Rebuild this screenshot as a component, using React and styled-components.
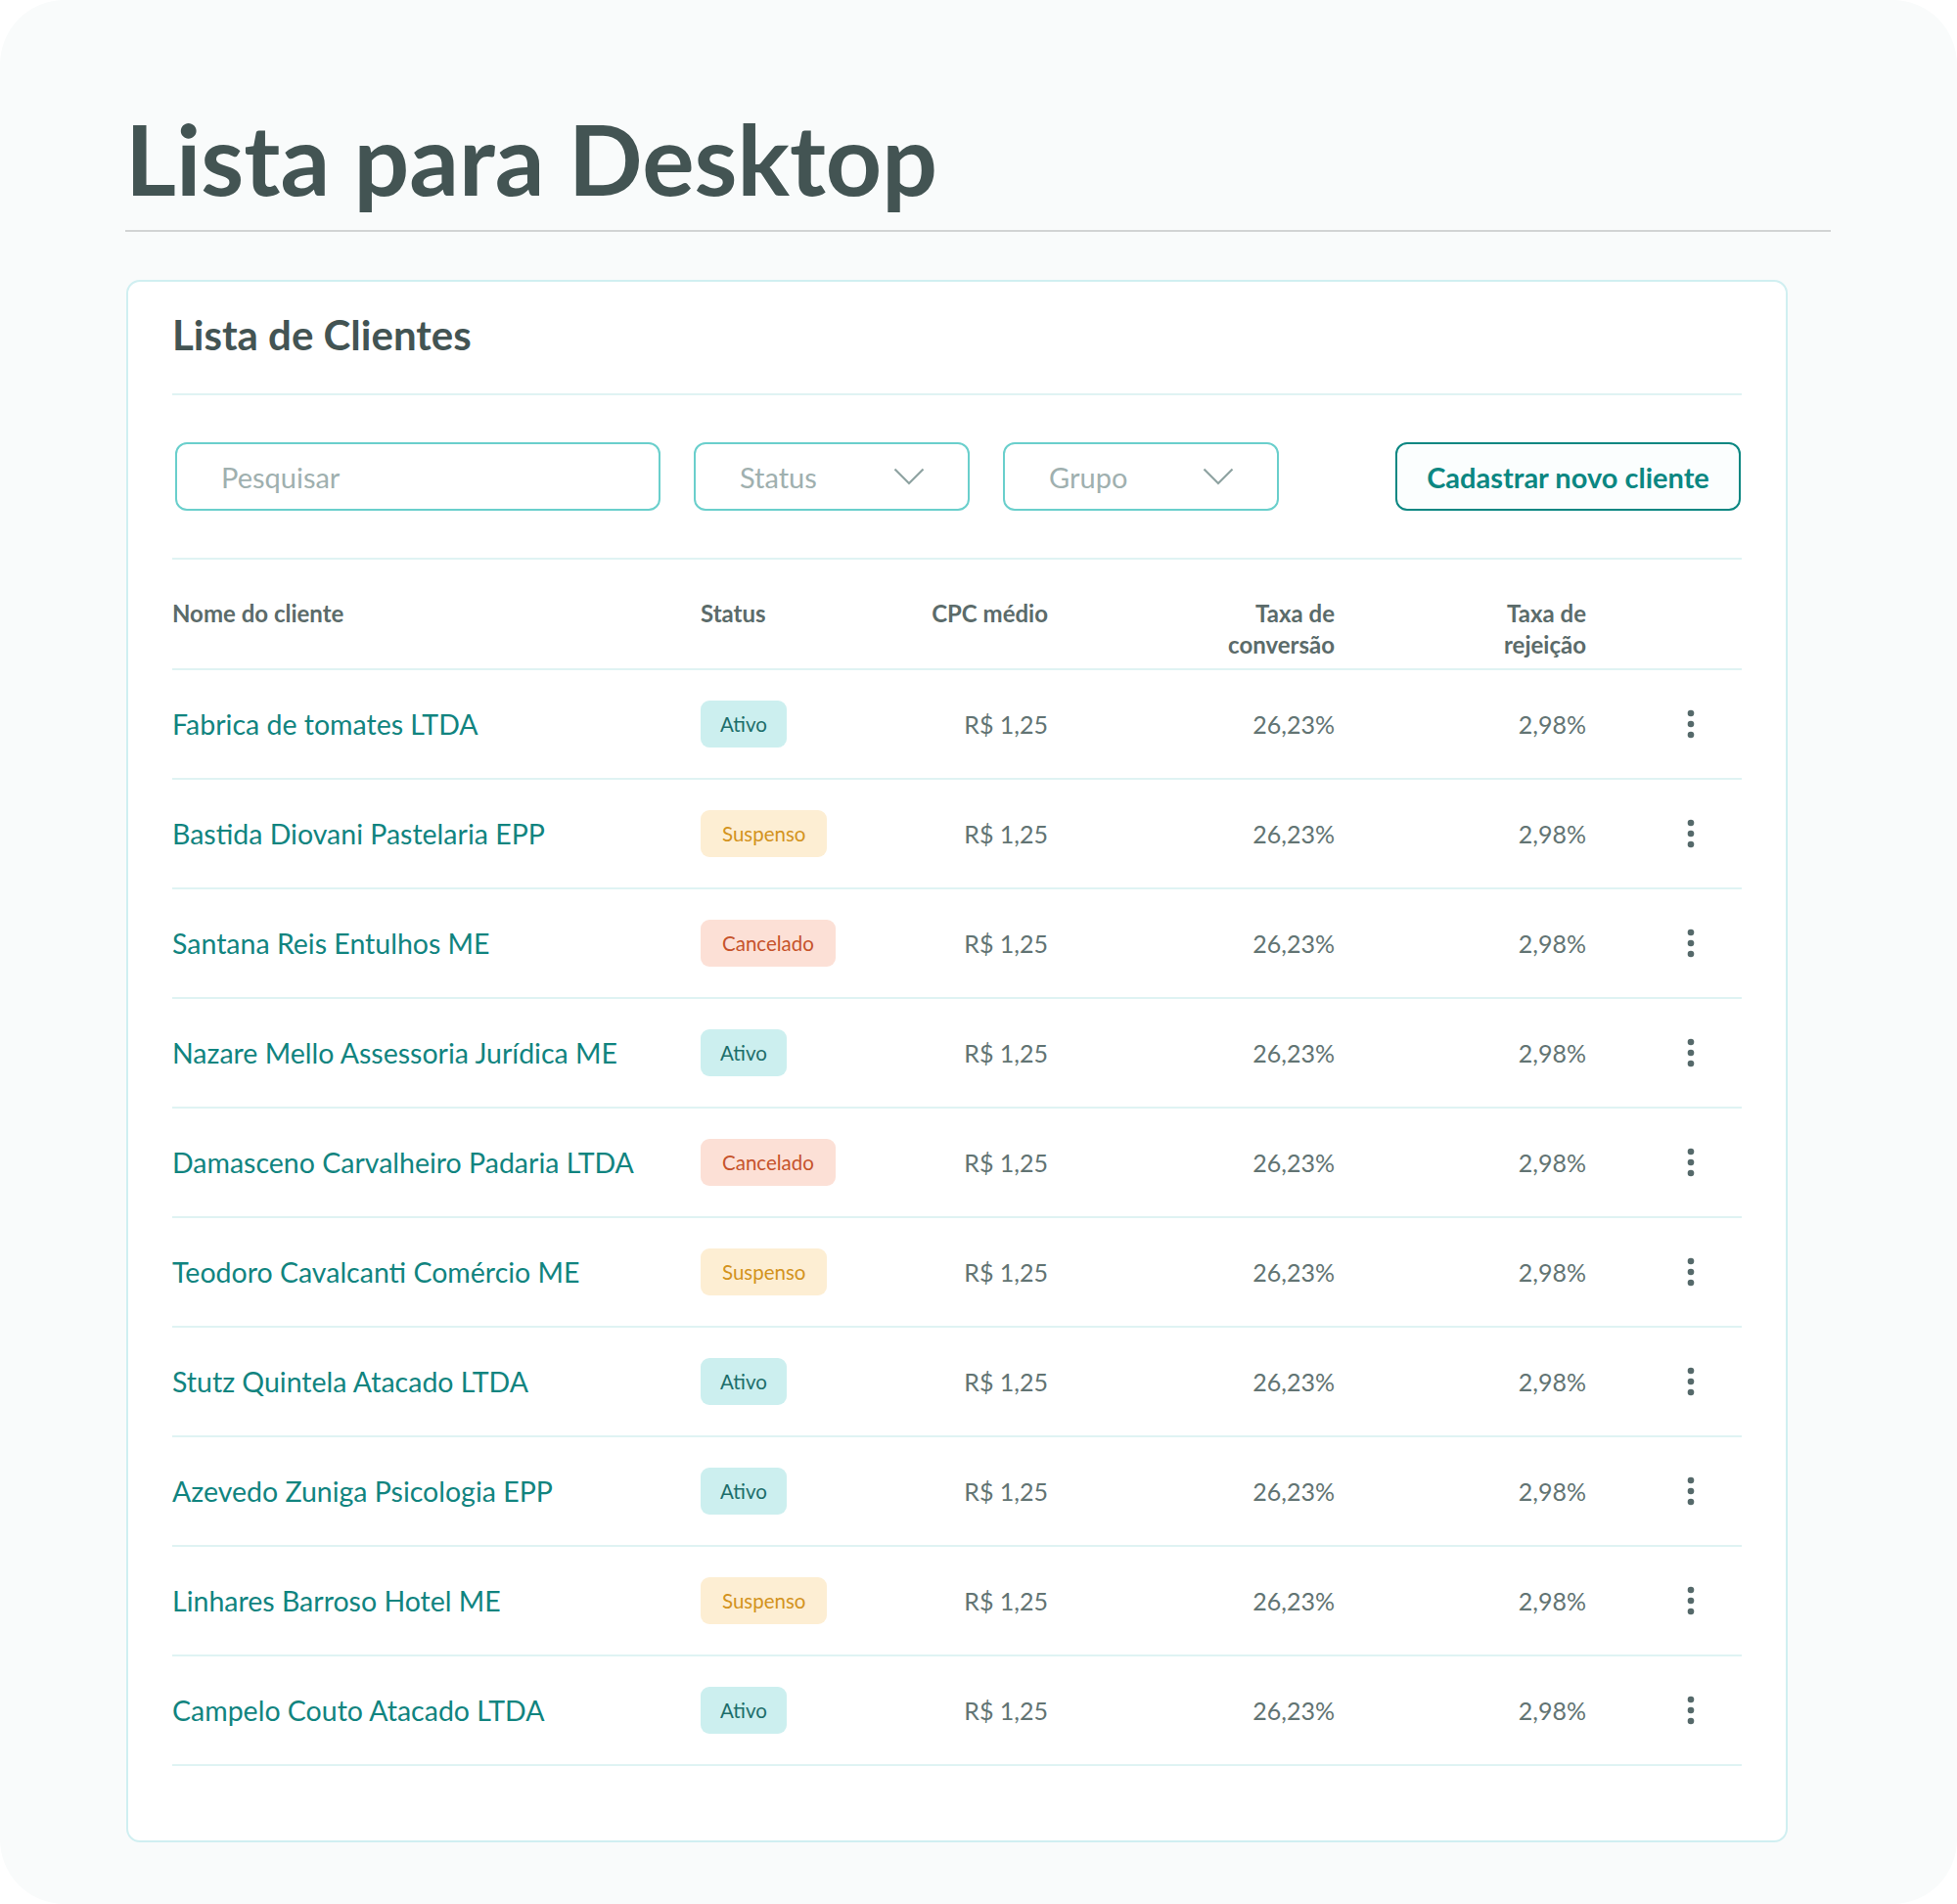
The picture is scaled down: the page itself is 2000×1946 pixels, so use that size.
import styled, { createGlobalStyle } from 'styled-components';

const GlobalStyle = createGlobalStyle`
  html, body {
    margin: 0;
    padding: 0;
    background: #ffffff;
  }
  * {
    box-sizing: border-box;
  }
  body {
    font-family: 'Lato', 'Noto Sans', sans-serif;
  }
`;

const Frame = styled.div`
  width: 2000px;
  min-height: 1946px;
  background: #f9fbfb;
  border-radius: 66px;
  padding: 111px 129px 0 128px;
`;

const PageTitle = styled.h1`
  margin: 0;
  font-size: 100px;
  line-height: 100px;
  font-weight: 700;
  color: #435453;
`;

const TitleRule = styled.hr`
  margin: 24px 0 0;
  border: 0;
  height: 2px;
  background: #d2d4d4;
`;

const Card = styled.section`
  width: 1698px;
  margin: 49px 0 0 1px;
  background: #ffffff;
  border: 2px solid #d0eff1;
  border-radius: 14px;
  padding: 29px 45px 76px;
`;

const CardTitle = styled.h2`
  margin: 0;
  font-size: 42px;
  line-height: 50px;
  font-weight: 700;
  color: #435453;
`;

const Rule = styled.div`
  height: 2px;
  background: #dff3f3;
  margin-top: ${(p) => p.gap}px;
`;

const Toolbar = styled.div`
  display: flex;
  align-items: center;
  gap: 34px;
  height: 70px;
  margin-top: 48px;
  padding: 0 1px 0 3px;
`;

const SearchInput = styled.input`
  width: 496px;
  height: 70px;
  border: 2px solid #6acfcc;
  border-radius: 12px;
  padding: 0 0 0 45px;
  font-family: 'Lato', sans-serif;
  font-size: 29px;
  color: #435453;
  background: #ffffff;
  outline: none;

  &::placeholder {
    color: #9fb0af;
  }
`;

const Select = styled.button`
  width: 282px;
  height: 70px;
  border: 2px solid #6acfcc;
  border-radius: 12px;
  background: #ffffff;
  padding: 0 44px 0 45px;
  display: flex;
  align-items: center;
  justify-content: space-between;
  font-family: 'Lato', sans-serif;
  font-size: 29px;
  color: #9fb0af;
  cursor: pointer;
`;

const PrimaryButton = styled.button`
  margin-left: auto;
  width: 353px;
  height: 70px;
  border: 2px solid #0b8782;
  border-radius: 12px;
  background: #fbfefe;
  font-family: 'Lato', sans-serif;
  font-size: 29px;
  font-weight: 700;
  color: #0b8782;
  cursor: pointer;
`;

const Table = styled.div`
  display: flex;
  flex-direction: column;
`;

const Row = styled.div`
  display: grid;
  grid-template-columns: 540px 205px 150px 293px 257px 1fr;
  align-items: ${(p) => (p.head ? 'start' : 'center')};
  height: ${(p) => (p.head ? 113 : 112)}px;
  padding-top: ${(p) => (p.head ? 39 : 0)}px;
  border-bottom: 2px solid #dff3f3;
`;

const HeadCell = styled.div`
  font-size: 24px;
  line-height: 32px;
  font-weight: 700;
  color: #5b6b6a;
  text-align: ${(p) => p.align || 'left'};
`;

const Name = styled.div`
  font-size: 28.5px;
  color: #11847f;
`;

const Value = styled.div`
  font-size: 25px;
  color: #627473;
  text-align: right;
`;

const badgeColors = {
  Ativo: { bg: '#ccefef', fg: '#1d6e6b' },
  Suspenso: { bg: '#fdeed3', fg: '#d3931d' },
  Cancelado: { bg: '#fce0d6', fg: '#c6532b' },
};

const Badge = styled.span`
  justify-self: start;
  display: inline-flex;
  align-items: center;
  height: 48px;
  padding: 0 ${(p) => (p.status === 'Ativo' ? 20 : 22)}px;
  border-radius: 9px;
  font-size: 20.5px;
  background: ${(p) => badgeColors[p.status].bg};
  color: ${(p) => badgeColors[p.status].fg};
`;

const MenuButton = styled.button`
  justify-self: end;
  margin-right: 47px;
  width: 10px;
  height: 32px;
  padding: 0;
  border: 0;
  background: transparent;
  display: flex;
  align-items: center;
  justify-content: center;
  cursor: pointer;
`;

const Chevron = () => (
  <svg width="32" height="18" viewBox="0 0 32 18" fill="none">
    <polyline points="1.5,1.5 16,16 30.5,1.5" stroke="#8ea3a1" strokeWidth="2.2" />
  </svg>
);

const Kebab = () => (
  <svg width="8" height="30" viewBox="0 0 8 30">
    <circle cx="4" cy="4" r="3.3" fill="#55696a" />
    <circle cx="4" cy="15" r="3.3" fill="#55696a" />
    <circle cx="4" cy="26" r="3.3" fill="#55696a" />
  </svg>
);

const clients = [
  ['Fabrica de tomates LTDA', 'Ativo'],
  ['Bastida Diovani Pastelaria EPP', 'Suspenso'],
  ['Santana Reis Entulhos ME', 'Cancelado'],
  ['Nazare Mello Assessoria Jurídica ME', 'Ativo'],
  ['Damasceno Carvalheiro Padaria LTDA', 'Cancelado'],
  ['Teodoro Cavalcanti Comércio ME', 'Suspenso'],
  ['Stutz Quintela Atacado LTDA', 'Ativo'],
  ['Azevedo Zuniga Psicologia EPP', 'Ativo'],
  ['Linhares Barroso Hotel ME', 'Suspenso'],
  ['Campelo Couto Atacado LTDA', 'Ativo'],
];

const App = () => {
  return (
    <>
      <GlobalStyle />
      <Frame>
        <PageTitle>Lista para Desktop</PageTitle>
        <TitleRule />
        <Card>
          <CardTitle>Lista de Clientes</CardTitle>
          <Rule gap={35} />
          <Toolbar>
            <SearchInput placeholder="Pesquisar" />
            <Select>
              Status
              <Chevron />
            </Select>
            <Select>
              Grupo
              <Chevron />
            </Select>
            <PrimaryButton>Cadastrar novo cliente</PrimaryButton>
          </Toolbar>
          <Rule gap={48} />
          <Table>
            <Row head>
              <HeadCell>Nome do cliente</HeadCell>
              <HeadCell>Status</HeadCell>
              <HeadCell align="right">CPC médio</HeadCell>
              <HeadCell align="right">
                Taxa de
                <br />
                conversão
              </HeadCell>
              <HeadCell align="right">
                Taxa de
                <br />
                rejeição
              </HeadCell>
              <div />
            </Row>
            {clients.map(([name, status], i) => (
              <Row key={i}>
                <Name>{name}</Name>
                <Badge status={status}>{status}</Badge>
                <Value>R$ 1,25</Value>
                <Value>26,23%</Value>
                <Value>2,98%</Value>
                <MenuButton aria-label="Mais opções">
                  <Kebab />
                </MenuButton>
              </Row>
            ))}
          </Table>
        </Card>
      </Frame>
    </>
  );
};

export default App;
